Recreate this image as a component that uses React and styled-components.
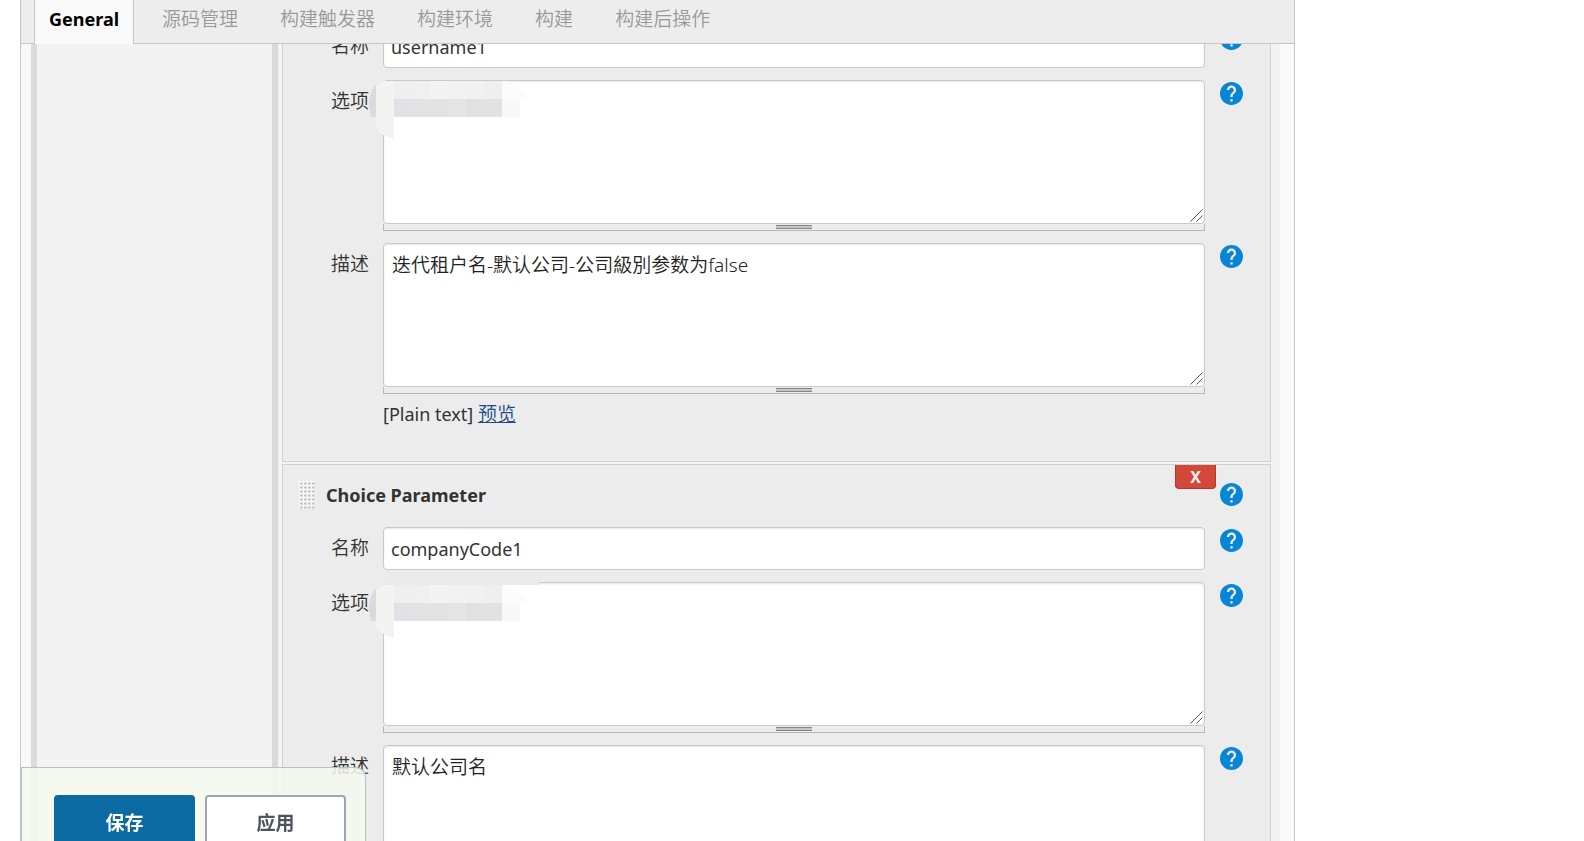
import { useId } from "react"
import styled, { createGlobalStyle } from "styled-components"

const GlobalStyle = createGlobalStyle`
  *, *::after {
    box-sizing: border-box;
  }
  body {
    margin: 0;
    background-color: #fff;
    color: #333;
    font-family: "Noto Sans", "Noto Sans CJK SC", sans-serif;
    font-size: 18px;
  }
  input, textarea, button {
    font: inherit;
    color: inherit;
  }
`

const Page = styled.div`
  position: relative;
  height: 100vh;
  margin: 0 289px 0 20px;
  border: solid #c6c6c6;
  border-width: 0 1px;
  background-color: #f9f9f9;
  overflow: hidden;
`

const TabBar = styled.nav`
  position: sticky;
  top: 0;
  z-index: 2;
  display: flex;
  gap: 14px;
  height: 44px;
  margin-bottom: -44px;
  padding-left: 13px;
  background-color: #ededed;
  border-bottom: 1px solid #c6c6c6;
`

const Tab = styled.a`
  height: ${({ $active }) => ($active ? "44px" : "43px")};
  padding: 0 14px;
  line-height: 38px;
  font-size: ${({ $active }) => ($active ? "18px" : "19px")};
  font-weight: ${({ $active }) => ($active ? 700 : 350)};
  color: ${({ $active }) => ($active ? "#000" : "#999")};
  background-color: ${({ $active }) => ($active ? "#f9f9f9" : "transparent")};
  border: solid ${({ $active }) => ($active ? "#c6c6c6" : "transparent")};
  border-width: ${({ $active }) => ($active ? "0 1px" : "0")};
  text-decoration: none;
`

const Body = styled.div`
  display: flex;
  min-height: 100%;
  padding: 0 14px 0 10px;
`

const Gutter = styled.div`
  flex: none;
  width: 247px;
  background-color: #f3f3f3;
  border: solid #dadada;
  border-width: 0 6px;
`

const Panels = styled.main`
  flex: 1;
  display: flex;
  flex-direction: column;
  gap: 2px;
  padding: 0 9px 0 4px;
  background-color: #f3f3f3;
`

const Panel = styled.section`
  display: flex;
  flex-direction: column;
  gap: 12px;
  padding: ${({ $first }) => ($first ? "25px" : "0")} 27px 34px 0;
  background-color: #ececec;
  border: 1px solid #d0d0d0;
  border-top-width: ${({ $first }) => ($first ? "0" : "1px")};
`

const PanelHead = styled.header`
  position: relative;
  display: flex;
  align-items: center;
  height: 50px;
  padding: 9px 0 0 16px;
`

const Title = styled.h2`
  flex: 1;
  margin: 0 0 0 11px;
  font-size: 18px;
  font-weight: 700;
`

const DeleteButton = styled.button`
  position: absolute;
  top: 0;
  right: 27px;
  width: 41px;
  height: 24px;
  padding: 1px 0 0;
  line-height: 22px;
  font-size: 16px;
  font-weight: 700;
  color: #eee;
  background-color: #d24939;
  border: 1px solid #b5392b;
  border-top-width: 0;
  border-radius: 0 0 4px 4px;
`

const Row = styled.div`
  display: grid;
  grid-template-columns: 86px 1fr 23px;
  column-gap: 14px;
  align-items: start;
`

const Label = styled.label`
  line-height: 42px;
  font-size: 19px;
  font-weight: 350;
  text-align: right;
`

const Field = styled.div`
  position: relative;
  display: flex;
  flex-direction: column;
  margin-right: 1px;
`

const TextInput = styled.input`
  width: 100%;
  height: 43px;
  padding: 0 7px;
  background-color: #fff;
  border: 1px solid #c9c9c9;
  border-radius: 4px;
  box-shadow: inset 0 1px 2px rgba(0, 0, 0, 0.1);
  outline: none;
`

const TextArea = styled.textarea`
  display: block;
  width: 100%;
  height: 144px;
  padding: 8px;
  line-height: 26px;
  font-size: 19px;
  font-weight: 350;
  color: #222;
  background-color: #fff;
  border: 1px solid #c9c9c9;
  border-radius: 4px;
  box-shadow: inset 0 1px 2px rgba(0, 0, 0, 0.1);
  outline: none;
  resize: none;
`

const AreaBox = styled.div`
  position: relative;
`

const Grip = styled.svg`
  position: absolute;
  right: 2px;
  bottom: 2px;
  pointer-events: none;
`

const ResizeBar = styled.div`
  display: flex;
  justify-content: center;
  height: 7px;
  padding-top: 1px;
  border: 1px solid #b8b8b4;
  border-top: 0;

  &::after {
    content: "";
    width: 36px;
    height: 4px;
    background-color: #c6c6c6;
    border: solid #858585;
    border-width: 1px 0;
  }
`

const Preview = styled.div`
  margin-top: 8px;
  line-height: 25px;
  a {
    font-size: 19px;
    font-weight: 350;
    color: #204a87;
  }
`

const HelpLink = styled.a`
  display: block;
  height: 23px;
  margin-top: ${({ $head }) => ($head ? "0" : "2px")};
  svg {
    display: block;
  }
`

const MosaicSvg = styled.svg`
  position: absolute;
  left: -14px;
  top: ${({ $top }) => $top}px;
  pointer-events: none;
`

const SaveBar = styled.footer`
  position: absolute;
  left: 0;
  bottom: 0;
  z-index: 3;
  display: flex;
  align-items: flex-start;
  gap: 10px;
  height: 74px;
  padding: 27px 19px 0 32px;
  background-color: rgba(245, 249, 239, 0.85);
  border: 1px solid #a9cabb;
  border-bottom: 0;
  border-radius: 0 10px 0 0;
  overflow: hidden;
`

const SaveButton = styled.button`
  flex: none;
  width: 141px;
  height: 54px;
  font-size: 19px;
  font-weight: 700;
  color: ${({ $primary }) => ($primary ? "#fff" : "#4d545d")};
  background-color: ${({ $primary }) => ($primary ? "#0b6aa2" : "#fff")};
  border: 2px solid ${({ $primary }) => ($primary ? "#0b6aa2" : "#9aa6b1")};
  border-radius: 4px;
`

const tabs = ["General", "源码管理", "构建触发器", "构建环境", "构建", "构建后操作"]

const Help = ({ head }) => (
  <HelpLink href="#help" aria-label="Help" $head={head}>
    <svg width="23" height="23" viewBox="2 2 20 20" fill="#0786d6">
      <path d="M12 2C6.48 2 2 6.48 2 12s4.48 10 10 10 10-4.48 10-10S17.52 2 12 2zm1 17h-2v-2h2v2zm2.07-7.75l-.9.92C13.45 12.9 13 13.5 13 15h-2v-.5c0-1.1.45-2.1 1.17-2.83l1.24-1.26c.37-.36.59-.86.59-1.41 0-1.1-.9-2-2-2s-2 .9-2 2H8c0-2.21 1.79-4 4-4s4 1.79 4 4c0 .88-.36 1.68-.93 2.25z" />
    </svg>
  </HelpLink>
)

const DragHandle = () => {
  const id = useId()
  return (
    <svg width="16" height="28" aria-hidden="true">
      <defs>
        <pattern id={id} width="4" height="4" patternUnits="userSpaceOnUse">
          <rect width="4" height="4" fill="#f8f8f6" />
          <rect x="1" y="1" width="3" height="3" fill="#dededb" />
          <rect x="2" y="2" width="1" height="1" fill="#b4b4ae" />
          <rect x="1" y="2" width="1" height="1" fill="#c8c8c4" />
        </pattern>
      </defs>
      <rect width="16" height="28" fill={`url(#${id})`} />
    </svg>
  )
}

// pixelated smudge over the hidden choices
const Mosaic = ({ top, cover }) => {
  const upper = ["#efefef", "#f0f0f0", "#f3f3f3", "#f2f2f2", "#f1f1f1", "#efefef"]
  const lower = ["#e0e2e5", "#e3e3e3", "#e3e3e3", "#e5e5e5", "#e1e1e1", "#e2e2e0"]
  const tail = cover ? 61 : 66
  return (
    <MosaicSvg $top={top} width="182" height="68" shapeRendering="crispEdges" aria-hidden="true">
      {cover && <path d="M8 8Q20 0 50 0H140Q162 0 171 6V8Z" fill="#ebebeb" />}
      <path d="M7 11Q0 20 0 32L2 44H7Z" fill="#d9dadc" />
      <path d={`M13 8H25V${tail}Q13 ${tail - 3} 7 ${tail - 10}V13Z`} fill="#f3f3f2" />
      {upper.map((fill, i) => (
        <rect key={i} x={25 + i * 18} y="8" width="18" height="18" fill={fill} />
      ))}
      {lower.map((fill, i) => (
        <rect key={i} x={25 + i * 18} y="26" width="18" height="18" fill={fill} />
      ))}
      <path d="M133 8H139Q153 12 161 26H133Z" fill="#fcfcfc" />
      <rect x="133" y="26" width="18" height="18" fill="#f7f8fb" />
    </MosaicSvg>
  )
}

const NameRow = ({ value }) => {
  const id = useId()
  return (
    <Row>
      <Label htmlFor={id}>名称</Label>
      <Field>
        <TextInput id={id} type="text" defaultValue={value} />
      </Field>
      <Help />
    </Row>
  )
}

const AreaRow = ({ label, value, children }) => {
  const id = useId()
  return (
    <Row>
      <Label htmlFor={id}>{label}</Label>
      <Field>
        <AreaBox>
          <TextArea id={id} defaultValue={value} spellCheck={false} />
          <Grip width="13" height="13" stroke="#555" aria-hidden="true">
            <path d="M0.5 12.5L12.5 0.5M6.5 12.5L12.5 6.5" />
          </Grip>
        </AreaBox>
        <ResizeBar />
        {children}
      </Field>
      <Help />
    </Row>
  )
}

const App = () => {
  return (
    <>
      <GlobalStyle />
      <Page>
        <TabBar>
          {tabs.map((tab, i) => (
            <Tab key={tab} href="#tab" $active={i === 0}>{tab}</Tab>
          ))}
        </TabBar>
        <Body>
          <Gutter />
          <Panels>
            <Panel $first>
              <NameRow value="username1" />
              <AreaRow label="选项">
                <Mosaic top={-7} />
              </AreaRow>
              <AreaRow label="描述" value="迭代租户名-默认公司-公司級別参数为false">
                <Preview>
                  [Plain text] <a href="#preview">预览</a>
                </Preview>
              </AreaRow>
            </Panel>
            <Panel>
              <PanelHead>
                <DragHandle />
                <Title>Choice Parameter</Title>
                <DeleteButton type="button">X</DeleteButton>
                <Help head />
              </PanelHead>
              <NameRow value="companyCode1" />
              <AreaRow label="选项">
                <Mosaic top={-5} cover />
              </AreaRow>
              <AreaRow label="描述" value="默认公司名" />
            </Panel>
          </Panels>
        </Body>
        <SaveBar>
          <SaveButton type="button" $primary>保存</SaveButton>
          <SaveButton type="button">应用</SaveButton>
        </SaveBar>
      </Page>
    </>
  )
}

export default App
